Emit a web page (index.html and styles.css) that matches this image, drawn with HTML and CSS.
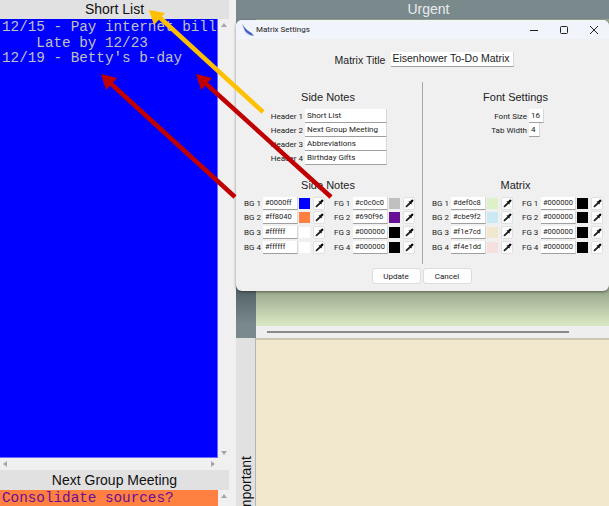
FILE: index.html
```html
<!DOCTYPE html>
<html>
<head>
  <title>Eisenhower To-Do Matrix</title>
  <link rel="stylesheet" href="styles.css">
</head>
<body>
  <svg width="0" height="0" class="defs">
    <symbol id="dropper" viewBox="0 0 12 12">
      <path d="M7 4.6 2.4 8.8 1.2 10.8 3.2 9.6 7.6 5.2Z" fill="#222" stroke="#222" stroke-width="1.4"/>
      <path d="M5.2 2.4 9.6 6.8 8.2 7 5 3.8Z" fill="#000"/>
      <path d="M6.6 3.4 8.8 1Q10 .3 11 1.2 11.7 2.2 10.8 3.4L8.6 5.4Z" fill="#000"/>
    </symbol>
  </svg>

  <div class="app">
    <div class="side">
      <div class="side-head">Short List</div>
      <div class="note-row note-row-main">
        <pre class="note note-blue">12/15 - Pay internet bill
    Late by 12/23
12/19 - Betty's b-day</pre>
        <div class="vbar"><span class="tri tri-up"></span><span class="tri tri-down"></span></div>
      </div>
      <div class="hbar"><span class="tri tri-left"></span><span class="tri tri-right"></span></div>
      <div class="side-head side-head-second">Next Group Meeting</div>
      <div class="note-row">
        <pre class="note note-orange">Consolidate sources?</pre>
        <div class="vbar"><span class="tri tri-up"></span></div>
      </div>
    </div>

    <div class="gutter"></div>

    <div class="matrix">
      <div class="matrix-top-side"></div>
      <div class="matrix-top">
        <div class="urgent">Urgent</div>
        <div class="quad-green"></div>
        <div class="splitter"><div class="splitter-line"></div></div>
      </div>
      <div class="important-head"><span class="important-text">Important</span></div>
      <div class="quad-beige"></div>
    </div>
  </div>

  <div class="dialog">
    <div class="titlebar">
      <svg class="app-icon" width="14" height="14" viewBox="0 0 14 14">
        <path d="M1 1 4 8Q7 12 13 13 10 9 6 7 3 4 1 1Z" fill="#3f5fc8"/>
        <path d="M3 8Q7 13 13 13 8 12 5 9Z" fill="#9fb4ea"/>
      </svg>
      <span class="title-text">Matrix Settings</span>
      <div class="win-buttons">
        <svg width="10" height="10" viewBox="0 0 10 10"><path d="M1 5.5H9" stroke="#222" stroke-width="1"/></svg>
        <svg width="10" height="10" viewBox="0 0 10 10"><rect x="1.5" y="1.5" width="7" height="7" rx="1" fill="none" stroke="#222"/></svg>
        <svg width="10" height="10" viewBox="0 0 10 10"><path d="M1 1 9 9M9 1 1 9" stroke="#222"/></svg>
      </div>
    </div>

    <div class="title-row">
      <label class="title-label">Matrix Title</label>
      <div class="field field-title">Eisenhower To-Do Matrix</div>
    </div>

    <div class="columns">
      <div class="col">
        <h2 class="sec-title">Side Notes</h2>
        <div class="headers">
          <div class="form-row"><label>Header 1</label><div class="field field-head">Short List</div></div>
          <div class="form-row"><label>Header 2</label><div class="field field-head">Next Group Meeting</div></div>
          <div class="form-row"><label>Header 3</label><div class="field field-head">Abbreviations</div></div>
          <div class="form-row"><label>Header 4</label><div class="field field-head">Birthday Gifts</div></div>
        </div>

        <h2 class="sec-title sec-title-colors">Side Notes</h2>
        <div class="colors">
          <div class="color-row"><label>BG 1</label><div class="field field-color">#0000ff</div><span class="swatch" style="background:#0000ff"></span><button class="pick"><svg width="12" height="12"><use href="#dropper"/></svg></button></div>
          <div class="color-row"><label>FG 1</label><div class="field field-color">#c0c0c0</div><span class="swatch" style="background:#c0c0c0"></span><button class="pick"><svg width="12" height="12"><use href="#dropper"/></svg></button></div>
          <div class="color-row"><label>BG 2</label><div class="field field-color">#ff8040</div><span class="swatch" style="background:#ff8040"></span><button class="pick"><svg width="12" height="12"><use href="#dropper"/></svg></button></div>
          <div class="color-row"><label>FG 2</label><div class="field field-color">#690f96</div><span class="swatch" style="background:#690f96"></span><button class="pick"><svg width="12" height="12"><use href="#dropper"/></svg></button></div>
          <div class="color-row"><label>BG 3</label><div class="field field-color">#ffffff</div><span class="swatch" style="background:#ffffff"></span><button class="pick"><svg width="12" height="12"><use href="#dropper"/></svg></button></div>
          <div class="color-row"><label>FG 3</label><div class="field field-color">#000000</div><span class="swatch" style="background:#000000"></span><button class="pick"><svg width="12" height="12"><use href="#dropper"/></svg></button></div>
          <div class="color-row"><label>BG 4</label><div class="field field-color">#ffffff</div><span class="swatch" style="background:#ffffff"></span><button class="pick"><svg width="12" height="12"><use href="#dropper"/></svg></button></div>
          <div class="color-row"><label>FG 4</label><div class="field field-color">#000000</div><span class="swatch" style="background:#000000"></span><button class="pick"><svg width="12" height="12"><use href="#dropper"/></svg></button></div>
        </div>
      </div>

      <div class="col col-right">
        <h2 class="sec-title">Font Settings</h2>
        <div class="headers headers-font">
          <div class="form-row"><label>Font Size</label><div class="field field-num">16</div></div>
          <div class="form-row"><label>Tab Width</label><div class="field field-num field-num-small">4</div></div>
        </div>

        <h2 class="sec-title sec-title-colors">Matrix</h2>
        <div class="colors">
          <div class="color-row"><label>BG 1</label><div class="field field-color">#def0c8</div><span class="swatch" style="background:#def0c8"></span><button class="pick"><svg width="12" height="12"><use href="#dropper"/></svg></button></div>
          <div class="color-row"><label>FG 1</label><div class="field field-color">#000000</div><span class="swatch" style="background:#000000"></span><button class="pick"><svg width="12" height="12"><use href="#dropper"/></svg></button></div>
          <div class="color-row"><label>BG 2</label><div class="field field-color">#cbe9f2</div><span class="swatch" style="background:#cbe9f2"></span><button class="pick"><svg width="12" height="12"><use href="#dropper"/></svg></button></div>
          <div class="color-row"><label>FG 2</label><div class="field field-color">#000000</div><span class="swatch" style="background:#000000"></span><button class="pick"><svg width="12" height="12"><use href="#dropper"/></svg></button></div>
          <div class="color-row"><label>BG 3</label><div class="field field-color">#f1e7cd</div><span class="swatch" style="background:#f1e7cd"></span><button class="pick"><svg width="12" height="12"><use href="#dropper"/></svg></button></div>
          <div class="color-row"><label>FG 3</label><div class="field field-color">#000000</div><span class="swatch" style="background:#000000"></span><button class="pick"><svg width="12" height="12"><use href="#dropper"/></svg></button></div>
          <div class="color-row"><label>BG 4</label><div class="field field-color">#f4e1dd</div><span class="swatch" style="background:#f4e1dd"></span><button class="pick"><svg width="12" height="12"><use href="#dropper"/></svg></button></div>
          <div class="color-row"><label>FG 4</label><div class="field field-color">#000000</div><span class="swatch" style="background:#000000"></span><button class="pick"><svg width="12" height="12"><use href="#dropper"/></svg></button></div>
        </div>
      </div>
    </div>

    <div class="actions">
      <button class="btn">Update</button>
      <button class="btn">Cancel</button>
    </div>
  </div>

  <!-- callout arrows drawn over the screenshot -->
  <svg class="arrows" width="609" height="506" viewBox="0 0 609 506">
    <path d="M263 112 157 15" stroke="#ffc000" stroke-width="4.5" fill="none"/>
    <path d="M149 10 165 13 154 25Z" fill="#ffc000"/>
    <path d="M235 197 108 81" stroke="#c00000" stroke-width="4.5" fill="none"/>
    <path d="M101 74 117 78 106 90Z" fill="#c00000"/>
    <path d="M331 197 203 81" stroke="#c00000" stroke-width="4.5" fill="none"/>
    <path d="M196 74 212 78 201 90Z" fill="#c00000"/>
  </svg>
</body>
</html>
```

FILE: styles.css
```css
* {
  box-sizing: border-box;
}

html, body {
  margin: 0;
  padding: 0;
  height: 506px;
  overflow: hidden;
}

body {
  position: relative;
  font-family: "Liberation Sans", Arial, sans-serif;
  background-color: #f0f0f0;
}

.defs {
  position: absolute;
}

.app {
  display: flex;
  width: 609px;
  height: 506px;
}

/* left column */
.side {
  width: 229px;
  display: flex;
  flex-direction: column;
}

.side-head {
  height: 19px;
  background-color: #e1e1e1;
  text-align: center;
  font-size: 14px;
  line-height: 18px;
  color: #111;
}

.side-head-second {
  height: 20px;
  line-height: 20px;
}

.note-row {
  display: flex;
  height: 16px;
}

.note-row-main {
  height: 439px;
}

.note {
  margin: 0;
  width: 218px;
  padding: 1px 0 0 2px;
  font-family: "Liberation Mono", "Courier New", monospace;
  font-size: 14.3px;
  line-height: 15.5px;
  overflow: hidden;
}

.note-blue {
  background-color: #0000ff;
  color: #c0c0c0;
  border-right: 1px solid #6a6aff;
  border-bottom: 1px solid #6a6aff;
}

.note-orange {
  background-color: #ff8040;
  color: #690f96;
}

.vbar {
  width: 11px;
  display: flex;
  flex-direction: column;
  justify-content: space-between;
  align-items: center;
  padding: 4px 0 3px;
}

.hbar {
  height: 12px;
  width: 218px;
  display: flex;
  justify-content: space-between;
  align-items: center;
  padding: 0 3px;
}

.tri {
  display: block;
  width: 0;
  height: 0;
  border-style: solid;
  border-color: transparent;
}

.tri-up {
  border-width: 0 3px 4px;
  border-bottom-color: #a6a6a6;
}

.tri-down {
  border-width: 4px 3px 0;
  border-top-color: #a6a6a6;
}

.tri-left {
  border-width: 3px 4px 3px 0;
  border-right-color: #a6a6a6;
}

.tri-right {
  border-width: 3px 0 3px 4px;
  border-left-color: #a6a6a6;
}

.gutter {
  width: 7px;
  background-color: #f0f0f0;
}

/* matrix behind the dialog */
.matrix {
  flex: 1;
  display: grid;
  grid-template-columns: 20px 1fr;
  grid-template-rows: 338px 1fr;
}

.matrix-top-side {
  background: linear-gradient(#7a898c 285px, #56656a 292px, #7a898c 325px);
}

.matrix-top {
  display: flex;
  flex-direction: column;
}

.urgent {
  height: 19px;
  background-color: #7a898c;
  color: #e8ecec;
  text-align: center;
  font-size: 14px;
  line-height: 18px;
  padding-right: 8px;
}

.quad-green {
  flex: 1;
  background: linear-gradient(#9aa88c 272px, #d6e6c2 305px);
}

.splitter {
  height: 12px;
  padding: 5px 40px 0 11px;
  background-color: #eeeeee;
}

.splitter-line {
  height: 2px;
  background-color: #8a8a8a;
}

.important-head {
  background-color: #e1e1e1;
  border-right: 1px solid #b5b5b5;
  position: relative;
  overflow: hidden;
}

.important-text {
  position: absolute;
  left: 3px;
  top: 118px;
  writing-mode: vertical-rl;
  transform: rotate(180deg);
  font-size: 14px;
  line-height: 14px;
  color: #111;
}

.quad-beige {
  background-color: #f1e7cd;
  border-top: 2px solid #cbc5b2;
}

/* settings dialog */
.dialog {
  position: absolute;
  left: 236px;
  top: 20px;
  width: 373px;
  height: 271px;
  background-color: #f0f0f0;
  border-radius: 6px;
  box-shadow: 0 1px 3px rgba(0, 0, 0, 0.45);
  color: #222;
  font-family: Roboto, "Open Sans", sans-serif;
  font-size: 8px;
}

.titlebar {
  height: 19px;
  display: flex;
  align-items: center;
  padding-left: 5px;
  background-color: #f1f4fb;
  border-radius: 6px 6px 0 0;
}

.app-icon {
  margin-right: 1px;
}

.title-text {
  font-size: 8px;
}

.win-buttons {
  margin-left: auto;
  display: flex;
  gap: 20px;
  padding-right: 10px;
}

.title-row {
  height: 43px;
  display: flex;
  align-items: center;
  justify-content: center;
  gap: 6px;
  padding: 1px 0 3px 4px;
}

.title-label {
  font-family: "Liberation Sans", Arial, sans-serif;
  font-size: 10.5px;
}

.field {
  height: 15px;
  flex: none;
  background-color: #fff;
  border-bottom: 1px solid #a0a0a0;
  border-right: 1px solid #d8d8d8;
  padding-left: 2px;
  line-height: 13px;
  white-space: nowrap;
  overflow: hidden;
}

.field-title {
  width: 123px;
  font-family: "Liberation Sans", Arial, sans-serif;
  font-size: 10.5px;
  padding-left: 1px;
}

.columns {
  display: flex;
  height: 182px;
}

.col {
  width: 187px;
  padding: 9px 0 0 8px;
  border-right: 1px solid #a8a8a8;
}

.col-right {
  width: 186px;
  padding-left: 9px;
  border-right: 0;
}

.sec-title {
  margin: 0 0 3px;
  padding-right: 10px;
  font-family: "Liberation Sans", Arial, sans-serif;
  font-size: 11px;
  font-weight: normal;
  line-height: 13px;
  text-align: center;
}

.sec-title-colors {
  margin-bottom: 4px;
}

.headers {
  height: 72px;
  display: flex;
  flex-direction: column;
  padding-top: 2px;
}

.form-row {
  height: 14px;
  display: flex;
  align-items: center;
  gap: 2px;
  justify-content: flex-end;
  padding-right: 35px;
}

.headers-font .form-row {
  justify-content: flex-start;
  padding: 0;
}

.headers-font label {
  width: 95px;
  text-align: right;
}

.field-head {
  width: 82px;
  height: 14px;
}

.field-num {
  width: 15px;
  height: 14px;
}

.field-num-small {
  width: 11px;
}

.colors {
  display: grid;
  grid-template-columns: 81px 81px;
  column-gap: 9px;
  grid-auto-rows: 14.6px;
}

.color-row {
  display: flex;
  align-items: center;
}

.color-row label {
  width: 19px;
  flex: none;
}

.field-color {
  width: 35px;
  height: 13px;
  line-height: 11px;
  margin-right: 1px;
  font-size: 7.5px;
}

.swatch {
  width: 11px;
  height: 11px;
  margin-right: 3px;
  flex: none;
}

.pick {
  width: 12px;
  height: 13px;
  flex: none;
  padding: 0;
  background-color: #fdfdfd;
  border: 1px solid #e0e0e0;
  border-radius: 2px;
  display: flex;
  align-items: center;
  justify-content: center;
}

.pick svg {
  width: 9px;
  height: 9px;
}

.actions {
  display: flex;
  justify-content: center;
  gap: 2px;
  padding-top: 4px;
  padding-right: 2px;
}

.btn {
  width: 49px;
  height: 16px;
  padding: 0;
  background-color: #fdfdfd;
  border: 1px solid #dcdcdc;
  border-radius: 3px;
  font-family: Roboto, "Open Sans", sans-serif;
  font-size: 8px;
  color: #222;
}

.arrows {
  position: absolute;
  left: 0;
  top: 0;
  pointer-events: none;
}
```
